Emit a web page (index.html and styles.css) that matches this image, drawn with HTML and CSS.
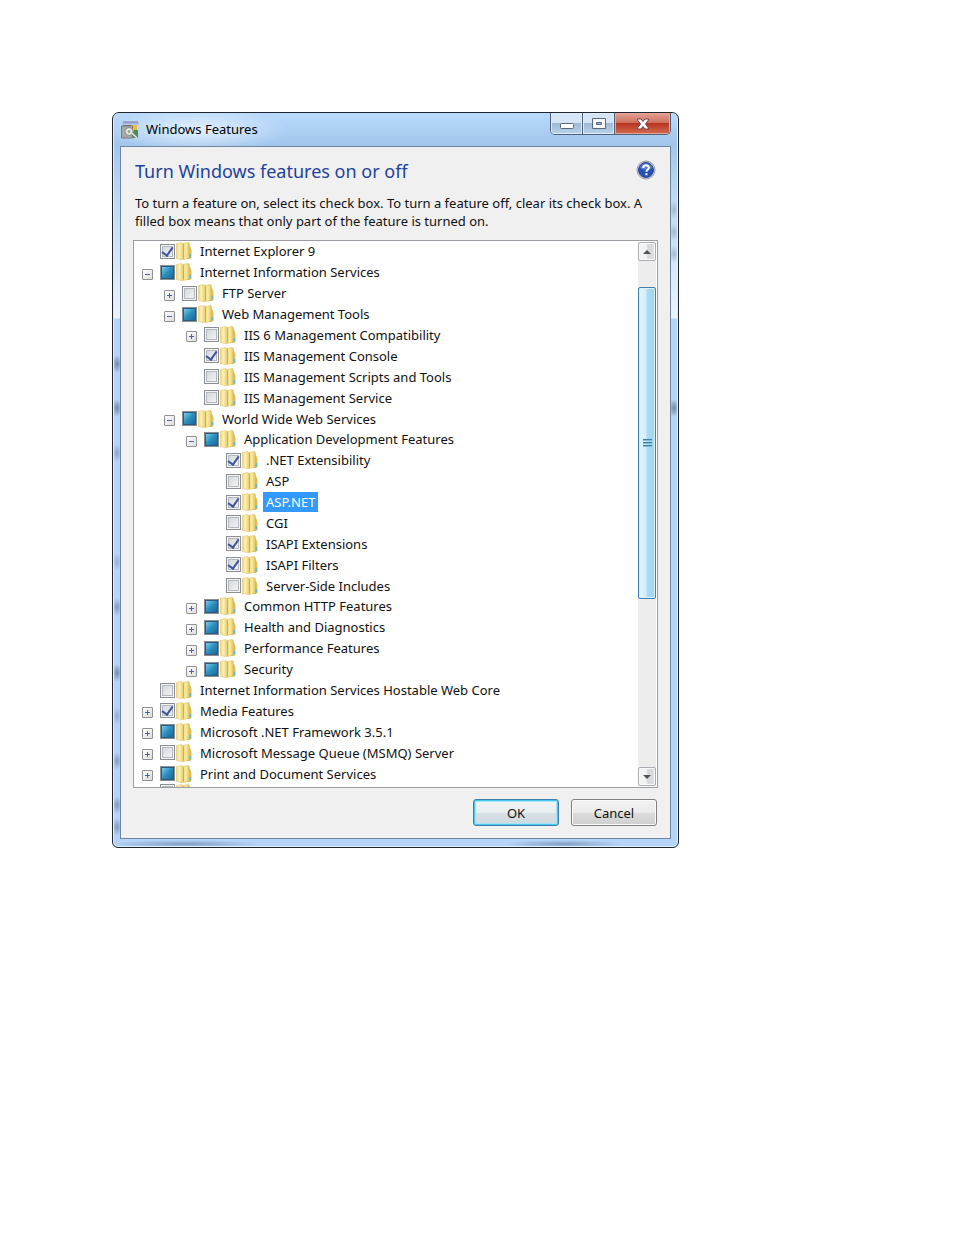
FILE: index.html
```html
<!DOCTYPE html>
<html lang="en">
<head>
<meta charset="utf-8">
<title>Windows Features</title>
<link rel="stylesheet" href="styles.css">
</head>
<body>
<svg class="defs" aria-hidden="true">
  <defs>
    <linearGradient id="gold-front" x1="0" x2="1"><stop offset="0" stop-color="#ecd67c"/><stop offset=".4" stop-color="#fbf1b8"/><stop offset="1" stop-color="#e6ca66"/></linearGradient>
    <linearGradient id="gold-back" x1="0" x2="1"><stop offset="0" stop-color="#ecd678"/><stop offset=".5" stop-color="#f8eba6"/><stop offset="1" stop-color="#dfbe50"/></linearGradient>
    <symbol id="folder" viewBox="0 0 16 18">
      <path d="M11 4 14.500 4.500 15.500 8v7.500l-1.500 1.500H11z" fill="#e0c058"/>
      <path d="M6.500 1.500 12.500 .5 13.500 2v14l-6 1.500z" fill="url(#gold-back)" stroke="#d8b650" stroke-width=".5"/>
      <path d="M13.500 12h1.500v3.500h-1.500z" fill="#62bcc8"/>
      <path d="M.5 1.500 5.500 .5 7.500 2v14L6.500 17.800.5 16.500z" fill="url(#gold-front)" stroke="#dcbe60" stroke-width=".5"/>
      <path d="M7.500 2.500v14" stroke="#c9a63c" stroke-width=".8" fill="none"/>
    </symbol>
  </defs>
</svg>
<main class="window">
  <header class="titlebar">
    <svg class="app-icon" viewBox="0 0 18 18" aria-hidden="true">
      <path d="M2 0.500h15l1 3H1z" fill="#a9b3da"/><path d="M2 1h15" stroke="#8187b8"/>
      <path d="M2 4h14v12H2z" fill="#70806f"/><path d="M10 4h6v6h-6z" fill="#f0bb38"/>
      <path d="M13 9h4v8h-5z" fill="#4c8a57"/><path d="M0.500 5v12h11V5z" fill="#a6aaa3" stroke="#777c77"/>
      <circle cx="8" cy="10.500" r="4" fill="#dfe6d9" stroke="#86908a"/><circle cx="8" cy="10.500" r="1.200" fill="#8b948d"/>
      <path d="M11 12l5 5" stroke="#e5e9e0" stroke-width="1.500"/>
    </svg>
    <span class="caption">Windows Features</span>
    <div class="window-buttons">
      <button type="button" class="win-btn" aria-label="Minimize"><svg width="16" height="12" viewBox="0 0 16 12"><rect x="1.500" y="5.500" width="13" height="5" rx="1" fill="#fff" stroke="#5b6879"/></svg></button>
      <button type="button" class="win-btn" aria-label="Maximize"><svg width="16" height="12" viewBox="0 0 16 12"><path fill-rule="evenodd" d="M1.500 .5h13v10h-13zM5.500 4.500v2h5v-2z" fill="#f7f8fa" stroke="#5b6879"/></svg></button>
      <button type="button" class="win-btn close" aria-label="Close"><svg width="16" height="12" viewBox="0 0 16 12"><path d="M2.500 1h3.500l2 2.500L10 1h3.500v1L10.500 6l3 4v1H10L8 8.500 6 11H2.500v-1l3-4-3-4z" fill="#fff" stroke="#71404a"/></svg></button>
    </div>
  </header>
  <section class="client">
    <div class="heading-row">
      <h1>Turn Windows features on or off</h1>
      <button type="button" class="help" aria-label="Help">
        <svg width="20" height="20" viewBox="0 0 20 20"><circle cx="10" cy="10" r="9" fill="#d5d8de" stroke="#9a9da3"/><circle cx="10" cy="10" r="7.500" fill="#2450b8" stroke="#3a4a90"/><path d="M4 8a6.300 6.300 0 0 1 12 0q-6 4-12 0z" fill="#7d9ee2" opacity=".6"/><path d="M7.300 8c0-3.600 5.600-3.500 5.600-.3 0 2-2.500 2-2.500 4M10.400 13.300v2" fill="none" stroke="#fff" stroke-width="2"/></svg>
      </button>
    </div>
    <p class="intro">To turn a feature on, select its check box. To turn a feature off, clear its check box. A filled box means that only part of the feature is turned on.</p>
    <div class="tree-box">
      <ul class="tree" id="tree"></ul>
      <div class="scrollbar">
        <button type="button" class="scroll-btn" aria-label="Scroll up"><svg width="10" height="6" viewBox="0 0 10 6"><path d="M1 5 5 1l4 4z" fill="#505459"/></svg></button>
        <div class="track"><div class="thumb"><i></i><i></i><i></i></div></div>
        <button type="button" class="scroll-btn" aria-label="Scroll down"><svg width="10" height="6" viewBox="0 0 10 6"><path d="M1 1 5 5l4-4z" fill="#505459"/></svg></button>
      </div>
    </div>
    <footer class="actions">
      <button type="button" class="btn default">OK</button>
      <button type="button" class="btn">Cancel</button>
    </footer>
  </section>
</main>
<script src="tree.js"></script>
</body>
</html>
```
FILE: tree.js
```js
// level, expander ("+", "-" or ""), state (on, off, part), name
const features = [
  [0, "", "on", "Internet Explorer 9"],
  [0, "-", "part", "Internet Information Services"],
  [1, "+", "off", "FTP Server"],
  [1, "-", "part", "Web Management Tools"],
  [2, "+", "off", "IIS 6 Management Compatibility"],
  [2, "", "on", "IIS Management Console"],
  [2, "", "off", "IIS Management Scripts and Tools"],
  [2, "", "off", "IIS Management Service"],
  [1, "-", "part", "World Wide Web Services"],
  [2, "-", "part", "Application Development Features"],
  [3, "", "on", ".NET Extensibility"],
  [3, "", "off", "ASP"],
  [3, "", "on", "ASP.NET"],
  [3, "", "off", "CGI"],
  [3, "", "on", "ISAPI Extensions"],
  [3, "", "on", "ISAPI Filters"],
  [3, "", "off", "Server-Side Includes"],
  [2, "+", "part", "Common HTTP Features"],
  [2, "+", "part", "Health and Diagnostics"],
  [2, "+", "part", "Performance Features"],
  [2, "+", "part", "Security"],
  [0, "", "off", "Internet Information Services Hostable Web Core"],
  [0, "+", "on", "Media Features"],
  [0, "+", "part", "Microsoft .NET Framework 3.5.1"],
  [0, "+", "off", "Microsoft Message Queue (MSMQ) Server"],
  [0, "+", "part", "Print and Document Services"],
  [0, "", "off", ""]
];

document.getElementById("tree").innerHTML = features.map(([level, expander, state, name], i) => {
  const toggle = expander
    ? `<button type="button" class="toggle ${expander === "+" ? "plus" : ""}" aria-label="${expander === "+" ? "Expand" : "Collapse"} ${name}"></button>`
    : `<span class="toggle-space"></span>`;
  return `<li class="item level-${level}">${toggle}<input type="checkbox" id="f${i}" ${state === "on" ? "checked" : ""}>` +
    `<svg class="folder" aria-hidden="true"><use href="#folder"/></svg>` +
    `<label for="f${i}" class="${name === "ASP.NET" ? "selected" : ""}">${name}</label></li>`;
}).join("");

features.forEach(([, , state], i) => {
  document.getElementById("f" + i).indeterminate = state === "part";
});
```
FILE: styles.css
```css
* { box-sizing: border-box; }

body {
  margin: 0;
  padding: 112px;
  background: #fff;
  color: #111;
  font: 13px/18px "Noto Sans", "Open Sans", sans-serif;
}

button { font: inherit; color: inherit; padding: 0; margin: 0; }
.defs { position: absolute; width: 0; height: 0; }

.window {
  max-width: 567px;
  padding: 0 7px 8px;
  border: 1px solid #20242c;
  border-radius: 7px 7px 6px 6px;
  box-shadow: inset 0 0 0 1px #dff0ff;
  background:
    radial-gradient(ellipse 5px 9px at 4px 251px, #7189a8, transparent),
    radial-gradient(ellipse 5px 9px at 4px 295px, #7189a8, transparent),
    radial-gradient(ellipse 5px 9px at 4px 340px, #8ba6c8, transparent),
    radial-gradient(ellipse 5px 9px at 4px 449px, #96b3d6, transparent),
    radial-gradient(ellipse 5px 9px at 4px 494px, #7f9abb, transparent),
    radial-gradient(ellipse 5px 9px at 4px 560px, #7189a8, transparent),
    radial-gradient(ellipse 5px 9px at 4px 603px, #93aed0, transparent),
    radial-gradient(ellipse 5px 9px at 4px 648px, #839dbe, transparent),
    radial-gradient(ellipse 5px 9px at 4px 692px, #7f9abb, transparent),
    radial-gradient(ellipse 5px 9px at 4px 714px, #7f9abb, transparent),
    radial-gradient(ellipse 5px 9px at 561px 97px, #a3b9d2, transparent),
    radial-gradient(ellipse 5px 9px at 561px 119px, #a3b9d2, transparent),
    radial-gradient(ellipse 5px 9px at 561px 141px, #a3b9d2, transparent),
    radial-gradient(ellipse 5px 9px at 561px 295px, #7189a8, transparent),
    radial-gradient(ellipse 75px 4px at 72px 731px, #7f9fc4, transparent),
    radial-gradient(ellipse 60px 4px at 450px 731px, #7f9fc4, transparent),
    linear-gradient(#b8d9fb 0, #a3c7ec 34px, #bcd8f5 80px, #e9f3fc 205px, #b4d5f8 206px);
}

.titlebar {
  display: flex;
  align-items: flex-start;
  height: 33px;
  margin: 0 -6px;
  padding: 0 6px 0 7px;
  border-radius: 6px 6px 0 0;
  background:
    radial-gradient(ellipse 90px 22px at 84px 17px, #e3f1ff, transparent),
    linear-gradient(#b9dafc, #a1c5eb);
}
.app-icon { width: 18px; height: 18px; margin-top: 8px; }
.caption { flex: 1; margin: 7px 0 0 7px; color: #000; }
.window-buttons {
  display: flex;
  height: 22px;
  border: 1px solid #4f6178;
  border-top: 0;
  border-radius: 0 0 5px 5px;
  overflow: hidden;
}
.win-btn {
  width: 32px;
  display: grid;
  place-items: center;
  border: 0;
  border-right: 1px solid #4f6178;
  box-shadow: inset 0 0 0 1px #dcecfb;
  background: linear-gradient(#d5e5f5 0 45%, #9eb9d4 50%, #b9d3ed);
}
.win-btn.close {
  width: 55px;
  border-right: 0;
  box-shadow: inset 0 0 0 1px #e9a594;
  background: linear-gradient(#e2a294, #cf7362 45%, #b93522 50%, #d26c50);
}

.client {
  padding: 10px 12px 12px;
  border: 1px solid #6f86a0;
  background: #f0f0f0;
}
.heading-row { display: flex; justify-content: space-between; align-items: flex-start; padding: 0 2px; }
h1 { margin: 2px 0 0; font-size: 18px; line-height: 24px; font-weight: 400; color: #1f429c; }
.help { display: grid; border: 0; background: none; margin-top: 3px; }
.intro { margin: 11px 0 10px 2px; }

.tree-box {
  display: flex;
  height: 548px;
  border: 1px solid #9a9da2;
  background: #fff;
}
.tree {
  flex: 1;
  display: grid;
  grid-template-rows: repeat(26, 1fr);
  grid-auto-rows: 3px;
  margin: 0;
  padding: 0 0 0 8px;
  overflow: hidden;
  list-style: none;
}
.item { display: flex; align-items: center; min-height: 0; }
.item:last-child { align-items: flex-start; overflow: hidden; }
.level-1 { padding-left: 22px; }
.level-2 { padding-left: 44px; }
.level-3 { padding-left: 66px; }

.toggle, .toggle-space { flex: none; width: 11px; height: 11px; margin-right: 7px; }
.toggle {
  align-self: flex-end;
  margin-bottom: 3px;
  border: 1px solid #919191;
  border-radius: 1px;
  background: linear-gradient(#4b63a7, #4b63a7) center / 5px 1px no-repeat, linear-gradient(135deg, #fff, #dcdcdc);
}
.toggle.plus {
  background:
    linear-gradient(#4b63a7, #4b63a7) center / 5px 1px no-repeat,
    linear-gradient(#4b63a7, #4b63a7) center / 1px 5px no-repeat,
    linear-gradient(135deg, #fff, #dcdcdc);
}

input[type="checkbox"] {
  appearance: none;
  flex: none;
  width: 15px;
  height: 15px;
  margin: 0;
  border: 1px solid #8b8f94;
  box-shadow: inset 0 0 0 1px #f4f4f4, inset 0 0 0 2px #b4b9bf;
  background: linear-gradient(135deg, #cfd3d8, #f8f8f8);
  display: grid;
  place-items: center;
}
input:checked::before {
  content: "";
  width: 5px;
  height: 9px;
  margin-bottom: 3px;
  border: solid #41569f;
  border-width: 0 2px 2px 0;
  transform: rotate(35deg);
}
input[type="checkbox"]:indeterminate { box-shadow: inset 0 0 0 1px #e6e9eb; }
input:indeterminate::before {
  content: "";
  width: 11px;
  height: 11px;
  border: 1px solid #2b5c80;
  background: linear-gradient(135deg, #7accea, #2b8dbd 50%, #1b6a99);
}
.folder { flex: none; width: 16px; height: 18px; margin-left: 1px; }
label { margin-left: 5px; padding: 1px 3px; white-space: nowrap; }
label.selected { background: #3399ff; color: #fff; }

.scrollbar { display: flex; flex-direction: column; width: 18px; margin: 1px; background: #ededed; }
.scroll-btn {
  display: grid;
  place-items: center;
  height: 19px;
  border: 1px solid #a9acb0;
  border-radius: 2px;
  box-shadow: inset 0 0 0 1px #fafafa;
  background: linear-gradient(90deg, #f3f3f3 45%, #d5d7da 55%, #dedfe2);
}
.track { flex: 1; padding-top: 26px; }
.thumb {
  display: flex;
  flex-direction: column;
  align-items: center;
  justify-content: center;
  gap: 1px;
  height: 312px;
  border: 1px solid #3c7fb1;
  border-radius: 2px;
  box-shadow: inset 0 0 0 1px #d8f2fd;
  background: linear-gradient(90deg, #e3f4fc 0, #d2edf9 45%, #a9dbf5 50%, #9ed6f2);
}
.thumb i { width: 9px; height: 2px; background: #397f9f; border-bottom: 1px solid #83bfd8; }

.actions { display: flex; justify-content: flex-end; gap: 12px; margin-top: 11px; padding-right: 1px; }
.btn {
  width: 86px;
  height: 27px;
  border: 1px solid #808080;
  border-radius: 3px;
  box-shadow: inset 0 0 0 1px #fcfcfc;
  background: linear-gradient(#f2f2f2, #ebebeb 50%, #dddddd 51%, #cfcfcf);
}
.btn.default {
  border-color: #3c7fb1;
  box-shadow: inset 0 0 0 1px #48c8ee, inset 0 0 0 2px #a5e2f5;
  background: linear-gradient(#f2f4f5, #e8eef0 50%, #d8e1e5 51%, #cdd8dd);
}
```
